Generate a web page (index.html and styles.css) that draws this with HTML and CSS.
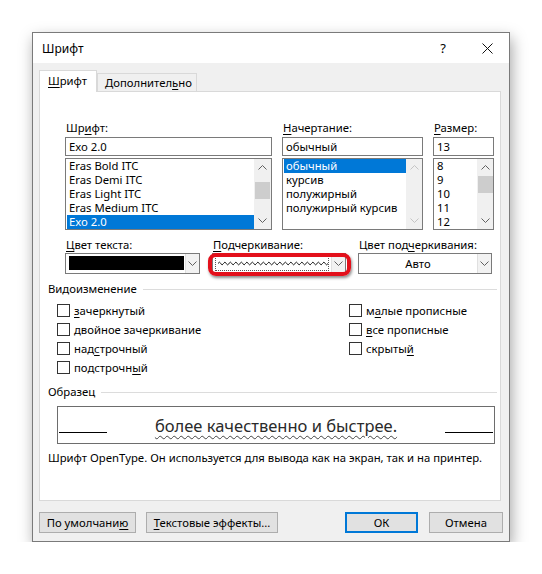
FILE: index.html
```html
<!DOCTYPE html>
<html lang="ru">
<head>
<meta charset="utf-8">
<title>Шрифт</title>
<link rel="stylesheet" href="styles.css">
</head>
<body>
<div class="dialog">
  <div class="titlebar">
    <span class="title">Шрифт</span>
    <span class="help">?</span>
    <svg class="close" width="11" height="11" viewBox="0 0 11 11"><path d="M0.5 0.5L10.5 10.5M10.5 0.5L0.5 10.5" stroke="#111" stroke-width="1" fill="none"/></svg>
  </div>
  <div class="tabs">
    <div class="tab active"><u>Ш</u>рифт</div>
    <div class="tab">Дополнител<u>ь</u>но</div>
  </div>
  <div class="panel">
    <div class="fontgrid">
      <div class="col">
        <div class="lbl">Шр<u>и</u>фт:</div>
        <div class="input">Exo 2.0</div>
        <div class="list">
          <div class="items">
            <div class="item">Eras Bold ITC</div>
            <div class="item">Eras Demi ITC</div>
            <div class="item">Eras Light ITC</div>
            <div class="item">Eras Medium ITC</div>
            <div class="item sel">Exo 2.0</div>
          </div>
          <div class="scroll">
            <span class="arr"><svg width="9" height="5" viewBox="0 0 9 5"><path d="M0.5 4.5L4.5 0.5L8.5 4.5" fill="none" stroke="#606060"/></svg></span>
            <span class="track t6"><span class="thumb"></span></span>
            <span class="arr"><svg width="9" height="5" viewBox="0 0 9 5"><path d="M0.5 0.5L4.5 4.5L8.5 0.5" fill="none" stroke="#606060"/></svg></span>
          </div>
        </div>
      </div>
      <div class="col">
        <div class="lbl"><u>Н</u>ачертание:</div>
        <div class="input">обычный</div>
        <div class="list">
          <div class="items">
            <div class="item sel">обычный</div>
            <div class="item">курсив</div>
            <div class="item">полужирный</div>
            <div class="item">полужирный курсив</div>
          </div>
          <div class="scroll off">
            <span class="arr"><svg width="9" height="5" viewBox="0 0 9 5"><path d="M0.5 4.5L4.5 0.5L8.5 4.5" fill="none" stroke="#c4c4c4"/></svg></span>
            <span class="track"></span>
            <span class="arr"><svg width="9" height="5" viewBox="0 0 9 5"><path d="M0.5 0.5L4.5 4.5L8.5 0.5" fill="none" stroke="#c4c4c4"/></svg></span>
          </div>
        </div>
      </div>
      <div class="col">
        <div class="lbl"><u>Р</u>азмер:</div>
        <div class="input">13</div>
        <div class="list">
          <div class="items">
            <div class="item">8</div>
            <div class="item">9</div>
            <div class="item">10</div>
            <div class="item">11</div>
            <div class="item">12</div>
          </div>
          <div class="scroll">
            <span class="arr"><svg width="9" height="5" viewBox="0 0 9 5"><path d="M0.5 4.5L4.5 0.5L8.5 4.5" fill="none" stroke="#606060"/></svg></span>
            <span class="track"><span class="thumb"></span></span>
            <span class="arr"><svg width="9" height="5" viewBox="0 0 9 5"><path d="M0.5 0.5L4.5 4.5L8.5 0.5" fill="none" stroke="#606060"/></svg></span>
          </div>
        </div>
      </div>
    </div>

    <div class="colorgrid">
      <div class="col">
        <div class="lbl"><u>Ц</u>вет текста:</div>
        <div class="dd">
          <span class="swatch"></span>
          <span class="ddarr"><svg width="9" height="5" viewBox="0 0 9 5"><path d="M0.5 0.5L4.5 4.5L8.5 0.5" fill="none" stroke="#606060"/></svg></span>
        </div>
      </div>
      <div class="col">
        <div class="lbl"><u>П</u>одчеркивание:</div>
        <div class="dd hl">
          <span class="wavebox"><svg width="110" height="5" viewBox="0 0 110 5"><path d="M0 2.5 Q1.375 -0.2 2.75 2.5 T5.5 2.5 T8.25 2.5 T11 2.5 T13.75 2.5 T16.5 2.5 T19.25 2.5 T22 2.5 T24.75 2.5 T27.5 2.5 T30.25 2.5 T33 2.5 T35.75 2.5 T38.5 2.5 T41.25 2.5 T44 2.5 T46.75 2.5 T49.5 2.5 T52.25 2.5 T55 2.5 T57.75 2.5 T60.5 2.5 T63.25 2.5 T66 2.5 T68.75 2.5 T71.5 2.5 T74.25 2.5 T77 2.5 T79.75 2.5 T82.5 2.5 T85.25 2.5 T88 2.5 T90.75 2.5 T93.5 2.5 T96.25 2.5 T99 2.5 T101.75 2.5 T104.5 2.5 T107.25 2.5 T110 2.5" fill="none" stroke="#111" stroke-width="1"/></svg></span>
          <span class="ddarr"><svg width="9" height="5" viewBox="0 0 9 5"><path d="M0.5 0.5L4.5 4.5L8.5 0.5" fill="none" stroke="#606060"/></svg></span>
        </div>
      </div>
      <div class="col">
        <div class="lbl">Цвет под<u>ч</u>еркивания:</div>
        <div class="dd">
          <span class="ddtext">Авто</span>
          <span class="ddarr"><svg width="9" height="5" viewBox="0 0 9 5"><path d="M0.5 0.5L4.5 4.5L8.5 0.5" fill="none" stroke="#606060"/></svg></span>
        </div>
      </div>
    </div>

    <div class="legend">Видоизменение</div>
    <div class="checks">
      <div class="chk"><span class="box"></span><span><u>з</u>ачеркнутый</span></div>
      <div class="chk"><span class="box"></span><span>м<u>а</u>лые прописные</span></div>
      <div class="chk"><span class="box"></span><span>двойное зачеркивание</span></div>
      <div class="chk"><span class="box"></span><span><u>в</u>се прописные</span></div>
      <div class="chk"><span class="box"></span><span>над<u>с</u>трочный</span></div>
      <div class="chk"><span class="box"></span><span>скрыты<u>й</u></span></div>
      <div class="chk"><span class="box"></span><span>подстрочн<u>ы</u>й</span></div>
    </div>

    <div class="legend sample-legend">Образец</div>
    <div class="sample">
      <span class="base"></span>
      <span class="stext">более качественно и быстрее.</span>
      <span class="base"></span>
    </div>
    <div class="desc">Шрифт OpenType. Он используется для вывода как на экран, так и на принтер.</div>
  </div>
  <div class="buttons">
    <button class="btn b1">По умолчани<u>ю</u></button>
    <button class="btn b2"><u>Т</u>екстовые эффекты...</button>
    <span class="spacer"></span>
    <button class="btn ok">ОК</button>
    <button class="btn cancel">Отмена</button>
  </div>
</div>
</body>
</html>
```
FILE: styles.css
```css
* { box-sizing: border-box; }
html, body { margin: 0; padding: 0; background: #fff; }
body {
  font-family: "Noto Sans", "Open Sans", sans-serif;
  font-size: 11.3px;
  color: #000;
}
u { text-decoration: underline; text-underline-offset: 2px; text-decoration-thickness: 1px; }

.dialog {
  margin: 32px 0 0 32px;
  width: 478px;
  height: 510px;
  border: 1px solid #7a7a7a;
  background: #f0f0f0;
  box-shadow: 2px 6px 14px rgba(0, 0, 0, 0.35);
  display: flex;
  flex-direction: column;
}

.titlebar {
  height: 30px;
  background: #fff;
  display: flex;
  align-items: center;
  padding-left: 9px;
  font-size: 12px;
}
.title { flex: 1; }
.help { width: 12px; text-align: center; margin-right: 33px; font-size: 13px; }
.close { margin-right: 16px; }

.tabs {
  height: 28px;
  display: flex;
  align-items: flex-end;
  padding-left: 6px;
}
.tab {
  height: 18px;
  width: 100px;
  line-height: 17px;
  padding: 0 0 0 7px;
  border: 1px solid #d9d9d9;
  border-bottom: none;
  background: #f0f0f0;
  white-space: nowrap;
}
.tab.active {
  height: 22px;
  line-height: 20px;
  padding: 0 0 0 8px;
  width: 58px;
  background: #fff;
  margin-bottom: -1px;
  position: relative;
  z-index: 1;
}

.panel {
  height: 410px;
  margin: 0 8px 0 6px;
  background: #fff;
  border: 1px solid #d9d9d9;
  padding: 28px 0 0 0;
}

.lbl { height: 16px; line-height: 16px; padding-left: 1px; white-space: nowrap; }

.fontgrid {
  display: grid;
  grid-template-columns: 207px 141px 61px;
  column-gap: 10px;
  padding-left: 25px;
}
.fontgrid .lbl { margin-bottom: 1px; }
.input {
  height: 19px;
  border: 1px solid #7a7a7a;
  line-height: 17px;
  padding-left: 3px;
  margin-bottom: 2px;
}
.list {
  height: 72px;
  border: 1px solid #7a7a7a;
  display: flex;
}
.items { flex: 1; padding-left: 1px; overflow: hidden; }
.item { height: 14px; line-height: 14px; padding-left: 2px; white-space: nowrap; }
.item.sel { background: #0078d7; color: #fff; }
.scroll { width: 17px; background: #f0f0f0; display: flex; flex-direction: column; }
.fontgrid .col:nth-child(2) .scroll { width: 16px; }
.fontgrid .col:nth-child(3) .scroll { width: 16px; }
.arr { height: 17px; display: flex; align-items: center; justify-content: center; }
.track { flex: 1; display: flex; flex-direction: column; align-items: center; }
.track.t6 { padding-top: 6px; }
.thumb { width: 15px; height: 17px; background: #cdcdcd; }

.colorgrid {
  display: grid;
  grid-template-columns: 135px 134px 134px;
  column-gap: 12px;
  padding-left: 25px;
  margin-top: 7px;
}
.dd {
  height: 21px;
  border: 1px solid #7a7a7a;
  background: #fff;
  display: flex;
}
.swatch { flex: 1; background: #000; margin: 2px 1px 3px 3px; }
.ddarr {
  width: 14px;
  display: flex;
  align-items: center;
  justify-content: center;
  background: #f2f2f2;
  border-left: 1px solid #e0e0e0;
}
.ddtext { flex: 1; text-align: center; line-height: 19px; }
.hl { position: relative; }
.hl::after {
  content: "";
  position: absolute;
  inset: -1px -6px -3px -5px;
  border: 4px solid #e3101b;
  border-radius: 8px;
  box-shadow: 1px 2px 3px rgba(0, 0, 0, 0.45);
  pointer-events: none;
}
.wavebox {
  flex: 1;
  margin: 2px;
  border: 1px dotted #555;
  display: flex;
  align-items: center;
  padding-left: 2px;
  overflow: hidden;
}

.legend {
  display: flex;
  align-items: center;
  height: 16px;
  line-height: 16px;
  margin: 7px 3px 0 8px;
}
.legend::after {
  content: "";
  flex: 1;
  height: 1px;
  background: #dcdcdc;
  margin-left: 6px;
}

.checks {
  display: grid;
  grid-template-columns: 292px auto;
  grid-auto-rows: 19px;
  padding-left: 17px;
  margin-top: 4px;
}
.chk { display: flex; align-items: center; gap: 4px; white-space: nowrap; }
.box { width: 13px; height: 13px; border: 1px solid #333; background: #fff; }

.sample-legend { margin-top: 7px; }
.sample {
  margin: 6px 5px 0 17px;
  height: 38px;
  border: 1px solid #6d6d6d;
  display: flex;
  align-items: flex-start;
  padding: 0 1px;
}
.base { width: 48px; height: 1px; background: #000; margin-top: 25px; }
.stext {
  flex: 1;
  text-align: center;
  font-size: 16.5px;
  line-height: 20px;
  margin-top: 9px;
  color: #2a2a2a;
  text-decoration: underline wavy #444;
  text-decoration-thickness: 1px;
  text-underline-offset: 3px;
}
.desc { height: 16px; line-height: 16px; margin: 6px 0 0 8px; white-space: nowrap; }

.buttons {
  display: flex;
  height: 21px;
  margin: 11px 6px 0 6px;
  gap: 10px;
}
.spacer { flex: 1; }
.btn {
  font: inherit;
  color: #000;
  height: 21px;
  background: #e1e1e1;
  border: 1px solid #adadad;
  padding: 0;
  line-height: 17px;
}
.b1 { width: 97px; }
.b2 { width: 132px; }
.ok { width: 73px; border: 2px solid #0078d7; margin-right: 1px; }
.cancel { width: 74px; }
```
